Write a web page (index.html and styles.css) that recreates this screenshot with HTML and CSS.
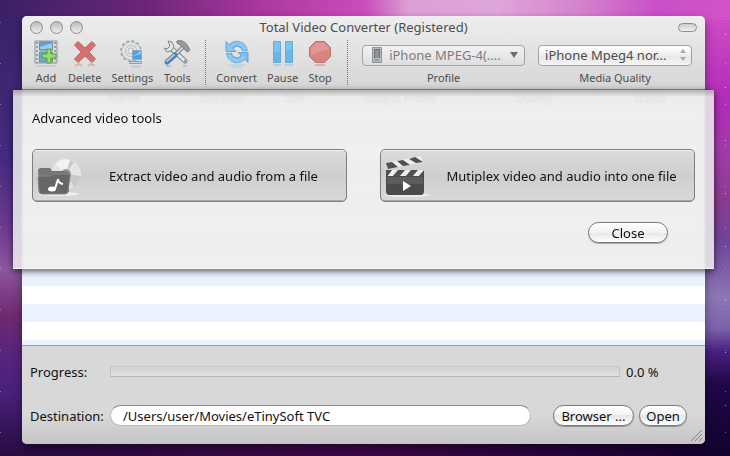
FILE: index.html
```html
<!DOCTYPE html>
<html lang="en">
<head>
<meta charset="utf-8">
<title>Total Video Converter</title>
<link rel="stylesheet" href="styles.css">
</head>
<body>
<main class="window">
  <header class="chrome">
    <div class="titlebar">
      <div class="lights">
        <button class="light" type="button" aria-label="Close window"></button>
        <button class="light" type="button" aria-label="Minimize"></button>
        <button class="light" type="button" aria-label="Zoom"></button>
      </div>
      <h1 class="title">Total Video Converter (Registered)</h1>
      <button class="pill" type="button" aria-label="Toggle toolbar"></button>
    </div>
    <div class="toolbar">
      <div class="tools">
        <button class="tool" type="button">
          <svg class="icon" viewBox="0 0 24 28">
            <path d="M1 1h22v22H1z" fill="#d9dcdc" stroke="#8d9595"/>
            <path d="M5.500 2h13v8h-13z" fill="#5ba3dc" stroke="#728a99"/>
            <path d="M5.500 12h13v10h-13z" fill="#62a9de" stroke="#728a99"/>
            <path d="M6 7l12-4v6H6z" fill="#9accee"/>
            <path d="M3 2v21M21 2v21" stroke="#9aa0a0" stroke-width="2" stroke-dasharray="2 2"/>
            <path d="M13 9h4v5h5v4h-5v5h-4v-5H8v-4h5z" fill="#9bdc69" stroke="#4fa43d"/>
            <path d="M2 25h20v2H2z" fill="#bac6ce" opacity=".6"/>
          </svg>
          Add
        </button>
        <button class="tool" type="button">
          <svg class="icon" viewBox="0 0 24 28">
            <path d="M5 1.500l7 6.500 7-6.500 3.500 3.500-6.500 7 6.500 7-3.500 3.500-7-6.500-7 6.500L1.500 19 8 12 1.500 5z" fill="#d4706e" stroke="#bf6664" stroke-linejoin="round"/>
            <path d="M2 26l4-2 3 2M15 26l3-2 4 2" fill="none" stroke="#d99a99" stroke-width="2" opacity=".6"/>
          </svg>
          Delete
        </button>
        <button class="tool" type="button">
          <svg class="icon" viewBox="0 0 24 28">
            <circle cx="11" cy="11" r="9.500" fill="none" stroke="#a2afb8" stroke-width="3" stroke-dasharray="2.500 2.500"/>
            <circle cx="11" cy="11" r="7.500" fill="none" stroke="#98a6af" stroke-width="4"/>
            <circle cx="11" cy="11" r="7.500" fill="none" stroke="#dfe4e7" stroke-width="3"/>
            <circle cx="11" cy="11" r="3" fill="#e7e9ea" stroke="#b3bdc3"/>
            <path d="M12.500 10.500h9v9h-9z" fill="#4c9fe0" stroke="#8faabd"/>
            <path d="M13 16l8-5v3z" fill="#91c9f3"/>
            <path d="M9.500 21.500h12v2h-12z" fill="#c9d5dd" stroke="#8da0ae"/>
            <path d="M11 26.500h10" stroke="#9fc4df" opacity=".6" stroke-width="2"/>
          </svg>
          Settings
        </button>
        <button class="tool" type="button">
          <svg class="icon icon-wide" viewBox="0 0 28 28">
            <path d="M8 8L22 21" stroke="#7b848b" stroke-width="5" stroke-linecap="round"/>
            <path d="M8 8L22 21" stroke="#e5e8ea" stroke-width="3" stroke-linecap="round"/>
            <path d="M5 1l4 1 2 5-3 4-4 1-3-4 3 1 3-3z" fill="#e2e5e7" stroke="#7c858b"/>
            <circle cx="22" cy="21" r="1" fill="#788085"/>
            <path d="M20 7L10 17" stroke="#7b8084" stroke-width="4"/>
            <path d="M20 7L10 17" stroke="#d5d8da" stroke-width="2"/>
            <path d="M14 1c6-1 8 1 10 4l3 5-3 2-5-6-5-3z" fill="#9a9ea1" stroke="#74797d"/>
            <path d="M12 15L4 22" stroke="#567fae" stroke-width="5" stroke-linecap="round"/>
            <path d="M11 15L4 21" stroke="#a9c7e6" stroke-width="2" stroke-linecap="round"/>
            <path d="M3 26h5M20 26h4" stroke="#91a5b8" stroke-width="2" opacity=".5"/>
          </svg>
          Tools
        </button>
      </div>
      <div class="actions">
        <button class="tool" type="button">
          <svg class="icon" viewBox="0 0 24 28">
            <g fill="none" stroke="#62a5da" stroke-width="6">
              <path d="M5 8a8 8 0 0 1 15 3"/><path d="M19 16a8 8 0 0 1-15-3"/>
            </g>
            <path d="M1 1.500v10h10z" fill="#8fc6f0" stroke="#62a5da" stroke-linejoin="round"/>
            <path d="M23 22.500v-10H13z" fill="#7dbbea" stroke="#62a5da" stroke-linejoin="round"/>
            <g fill="none" stroke="#8fc6f0" stroke-width="4">
              <path d="M5 8a8 8 0 0 1 15 2"/><path d="M19 16a8 8 0 0 1-15-2"/>
            </g>
            <path d="M3 25h18M6 27h12" stroke="#94c2e4" opacity=".6"/>
          </svg>
          Convert
        </button>
        <button class="tool" type="button">
          <svg class="icon" viewBox="0 0 24 28">
            <path d="M2.500 1.500h7v21h-7zM14.500 1.500h7v21h-7z" fill="#7cc4f0" stroke="#67abd7" stroke-linejoin="round"/>
            <path d="M3 13l6-2v11H3zM15 11l6-2v13h-6z" fill="#68b7ec"/>
            <path d="M2 25h8M14 25h8" stroke="#a0c8e2" stroke-width="2" opacity=".7"/>
          </svg>
          Pause
        </button>
        <button class="tool" type="button">
          <svg class="icon" viewBox="0 0 24 28">
            <path d="M7.500 1.500h9l6 6v9l-6 6h-9l-6-6v-9z" fill="#d98481" stroke="#b77270"/>
            <path d="M8 3h8l5 5v2C15 10 9 13 3 15V8z" fill="#e09996"/>
            <path d="M7 25h10" stroke="#d6a09e" stroke-width="2" opacity=".7"/>
          </svg>
          Stop
        </button>
      </div>
      <div class="field profile">
        <div class="combo">
          <svg class="phone" viewBox="0 0 10 16">
            <path d="M.5.5h9v15h-9z" fill="#bbb" stroke="#929292"/>
            <path d="M2 2h6v9H2z" fill="#68727a"/>
            <path d="M3 4h4M3 6h4M3 8h4M3 10h4" stroke="#aab8bf"/>
            <path d="M3 13h4" stroke="#777"/>
          </svg>
          <select class="select select-profile" id="profile"><option>iPhone MPEG-4(....</option></select>
          <svg class="arrow" viewBox="0 0 8 6"><path d="M0 0h8L4 6z" fill="#6e6e6e"/></svg>
        </div>
        <label for="profile">Profile</label>
      </div>
      <div class="field quality">
        <div class="combo">
          <select class="select select-quality" id="quality"><option>iPhone Mpeg4 nor...</option></select>
          <svg class="steppers" viewBox="0 0 6 12"><path d="M0 4h6L3 0zM0 8h6l-3 4z" fill="#aaa"/></svg>
        </div>
        <label for="quality">Media Quality</label>
      </div>
    </div>
  </header>

  <section class="content">
    <table class="files">
      <colgroup>
        <col class="c-mark"><col class="c-name"><col class="c-duration"><col class="c-size"><col class="c-output"><col class="c-quality"><col class="c-status">
      </colgroup>
      <thead>
        <tr><th></th><th>Name</th><th>Duration</th><th>Size</th><th>Output Profile</th><th>Quality</th><th>Status</th></tr>
      </thead>
    </table>
    <div class="sheet" role="dialog" aria-labelledby="sheet-title">
      <h2 class="sheet-title" id="sheet-title">Advanced video tools</h2>
      <div class="choices">
        <button class="choice" type="button">
          <svg class="choice-icon" viewBox="0 0 48 44">
            <ellipse cx="22" cy="40" rx="20" ry="2" fill="#eee"/>
            <circle cx="29" cy="20" r="15" fill="#e4e4e4"/>
            <path d="M29 20L18 10A15 15 0 0 1 33 6z" fill="#f2f2f2"/>
            <path d="M29 20L33 6l4 2zM29 20l15 2a15 15 0 0 1-7 11z" fill="#c9c9c9"/>
            <circle cx="29" cy="20" r="5" fill="#999"/>
            <circle cx="29" cy="20" r="2" fill="#ddd"/>
            <path d="M1 17q0-3 3-3h9l2 3h14q3 0 3 3v18H3z" fill="#747474"/>
            <path d="M1 24q0-2 3-2h9l3-2h15q3 0 2 3l-2 14q0 3-3 3H5q-3 0-3-3z" fill="#666" stroke="#858585"/>
            <ellipse cx="15" cy="35" rx="4" ry="2.500" fill="#fff"/>
            <path d="M18 35l3-10q0 4 5 5" fill="none" stroke="#fff" stroke-width="2"/>
          </svg>
          <span class="choice-text">Extract video and audio from a file</span>
        </button>
        <button class="choice" type="button">
          <svg class="choice-icon" viewBox="0 0 48 44">
            <ellipse cx="22" cy="41" rx="22" ry="2" fill="#efefef"/>
            <path d="M1 9L36 2l2 6L3 15z" fill="#eee"/>
            <path d="M1 9l6-1 6 5-10 2zM12 7l6-1 7 5-7 1zM24 5l6-2 8 5-7 1z" fill="#505050"/>
            <path d="M1 16h38v7H1z" fill="#eee"/>
            <path d="M1 16h6l-5 7H1zM13 16h7l-6 7H7zM26 16h7l-6 7h-7zM39 16v7h-6z" fill="#505050"/>
            <path d="M1 22h38v15q0 4-3 4H4q-3 0-3-4z" fill="#4b4b4b"/>
            <path d="M2 23h36v7H2z" fill="#5c5c5c"/>
            <path d="M18 27l8 5-8 5z" fill="#fff"/>
          </svg>
          <span class="choice-text">Mutiplex video and audio into one file</span>
        </button>
      </div>
      <div class="sheet-actions"><button class="aqua aqua-close" type="button">Close</button></div>
    </div>
  </section>

  <footer class="bottom">
    <div class="row row-progress">
      <span class="row-label" id="progress-label">Progress:</span>
      <div class="progress" role="progressbar" aria-labelledby="progress-label" aria-valuenow="0" aria-valuemin="0" aria-valuemax="100"></div>
      <span class="percent">0.0 %</span>
    </div>
    <div class="row">
      <label class="row-label" for="destination">Destination:</label>
      <input class="path" id="destination" type="text" value="/Users/user/Movies/eTinySoft TVC">
      <div class="row-buttons">
        <button class="aqua aqua-browse" type="button">Browser ...</button>
        <button class="aqua aqua-open" type="button">Open</button>
      </div>
    </div>
    <svg class="grip" viewBox="0 0 12 12"><path d="M1 12L12 1M5 12l7-7M9 12l3-3" stroke="#858585" fill="none"/></svg>
  </footer>
</main>
</body>
</html>
```
FILE: styles.css
```css
* { box-sizing: border-box; }

body {
  margin: 0;
  min-height: 100vh;
  display: flex;
  padding: 16px 25px 12px 22px;
  font: 13px/16px "Noto Sans", "Open Sans", sans-serif;
  color: #111;
  background:
    radial-gradient(circle, rgba(255, 255, 255, .6), transparent 1px) 4px 8px / 37px 53px,
    radial-gradient(circle, rgba(255, 255, 255, .35), transparent 1px) 15px 2px / 29px 41px,
    linear-gradient(90deg, #3a2065, #6c2579 20%, #a9369d 35%, #cc4cbc 50%, #dc9fd5 56%, #dfa6da 68%, #d481cd 80%, #c94fc8 90%, #d352c8) top / 100% 20px no-repeat,
    linear-gradient(#3a2065, #452b80 35%, #6d3a90 50%, #8c579f 59%, #6f2a70 69%, #55257d 78%, #4a207c 86%, #280c42) left / 24px 100% no-repeat,
    linear-gradient(#d352c8, #b12cb8 22%, #a23ba9 33%, #8a3c90 44%, #6f449b 53%, #8c77b4 65%, #7c62aa 72%, #4a2080 77%, #200849 84%, #12022f) right / 27px 100% no-repeat,
    linear-gradient(90deg, #280c42, #3c0648 50%, #12022f);
}

button, select, input { font: inherit; color: inherit; margin: 0; }
button { cursor: default; }

.window {
  flex: 1;
  min-width: 0;
  display: flex;
  flex-direction: column;
  border-radius: 5px;
  background: #d7d7d7;
  box-shadow: 0 4px 10px rgba(0, 0, 0, .4);
}

.chrome {
  border-radius: 5px 5px 0 0;
  border-bottom: 1px solid #8c8c8c;
  background: linear-gradient(#eee, #d6d6d6);
  color: #4c4c4c;
}

.titlebar {
  display: grid;
  grid-template-columns: 1fr auto 1fr;
  align-items: center;
  height: 22px;
  padding: 0 8px;
}
.lights { display: flex; gap: 7px; }
.light {
  width: 13px;
  height: 13px;
  padding: 0;
  border: 1px solid #8e8e8e;
  border-radius: 50%;
  background: linear-gradient(#bbb, #eee);
}
.title { margin: 0; font-size: 13px; font-weight: 400; }
.pill {
  justify-self: end;
  width: 19px;
  height: 9px;
  padding: 0;
  border: 1px solid #8f8f8f;
  border-radius: 5px;
  background: linear-gradient(#ccc, #f1f1f1);
}

.toolbar {
  display: flex;
  align-items: flex-start;
  padding: 2px 13px 4px 12px;
  font-size: 11px;
  line-height: 14px;
}
.tools, .actions { display: flex; gap: 10px; }
.tools { padding-right: 14px; border-right: 1px dotted #777; }
.actions { padding: 0 15px 0 10px; border-right: 1px dotted #777; }
.tool {
  display: flex;
  flex-direction: column;
  align-items: center;
  gap: 3px;
  padding: 0;
  border: 0;
  background: none;
}
.icon { width: 24px; height: 28px; }
.icon-wide { width: 28px; }

.field {
  display: flex;
  flex-direction: column;
  align-items: center;
  gap: 5px;
  padding-top: 5px;
}
.profile { flex: 163; margin-left: 14px; }
.quality { flex: 154; margin-left: 13px; }
.combo { position: relative; width: 100%; }
.select {
  display: block;
  appearance: none;
  width: 100%;
  height: 21px;
  border: 1px solid #a2a2a2;
  border-radius: 4px;
  background: linear-gradient(#fff, #eee 50%, #e7e7e7 50%, #f4f4f4);
  font-size: 13px;
  line-height: 19px;
}
.select-profile { padding: 0 22px 0 26px; color: #7c7c7c; background: linear-gradient(#f2f2f2, #dedede); }
.select-quality { padding: 0 20px 0 6px; }
.phone { position: absolute; left: 10px; top: 2px; width: 10px; height: 16px; z-index: 1; }
.arrow { position: absolute; right: 7px; top: 7px; width: 8px; height: 6px; }
.steppers { position: absolute; right: 6px; top: 4px; width: 6px; height: 12px; }

.content {
  position: relative;
  flex: 1;
  min-height: 180px;
  border-bottom: 1px solid #a0a0a0;
  background: repeating-linear-gradient(#fff 0 18px, #eaf1ff 18px 36px) 0 16px;
}
.files { width: 100%; table-layout: fixed; border-collapse: collapse; }
.files th {
  height: 16px;
  padding: 0;
  border-right: 1px solid #ccc;
  background: #eee;
  color: #777;
  font-size: 11px;
  font-weight: 400;
  line-height: 14px;
}
.c-mark { width: 6%; }
.c-name { width: 18%; }
.c-duration { width: 11%; }
.c-size { width: 10%; }
.c-output { width: 21%; }
.c-quality { width: 18%; }

.sheet {
  position: absolute;
  top: 0;
  left: -9px;
  right: -9px;
  padding: 20px 19px 26px;
  background: linear-gradient(rgba(120, 120, 120, .5), transparent 7px), rgba(237, 237, 237, .87);
  backdrop-filter: blur(1px);
  box-shadow: 0 2px 7px rgba(0, 0, 0, .65), inset 0 -1px #f8f8f8;
}
.sheet-title { margin: 0 0 23px; font-size: 13px; font-weight: 400; }
.choices { display: flex; gap: 33px; }
.choice {
  flex: 1;
  display: flex;
  align-items: center;
  height: 53px;
  padding: 0 4px;
  border: 1px solid #7e7e7e;
  border-radius: 5px;
  background: linear-gradient(#dcdcdc, #cecece 50%, #d9d9d9);
  box-shadow: inset 0 1px #f3f3f3, inset 0 -1px #aaa;
}
.choice-icon { width: 48px; height: 44px; }
.choice-text { flex: 1; }
.sheet-actions { display: flex; justify-content: flex-end; padding: 20px 27px 0 0; }

.aqua {
  height: 21px;
  padding: 0;
  border: 1px solid #777;
  border-radius: 11px;
  background: linear-gradient(#fff, #f2f2f2 50%, #e6e6e6 50%, #fff);
  box-shadow: 0 1px 1px rgba(0, 0, 0, .3);
  line-height: 18px;
}
.aqua-close { width: 80px; }
.aqua-browse { width: 81px; }
.aqua-open { width: 48px; }

.bottom {
  position: relative;
  display: flex;
  flex-direction: column;
  gap: 23px;
  padding: 15px 18px 18px 8px;
  border-radius: 0 0 5px 5px;
  background: linear-gradient(#d8d8d8 70%, #c5c5c5);
}
.row { display: flex; align-items: center; }
.row-label { width: 80px; }
.row-progress { height: 21px; }
.progress {
  flex: 1;
  height: 11px;
  border: 1px solid #c6c6c6;
  border-bottom-color: #b4b4b4;
  background: linear-gradient(#d1d1d1, #e2e2e2);
}
.percent { width: 67px; padding-left: 6px; }
.path {
  flex: 1;
  min-width: 0;
  height: 21px;
  padding: 0 12px;
  border: 1px solid #bbb;
  border-top-color: #888;
  border-radius: 11px;
  background: #fff;
}
.row-buttons { display: flex; gap: 5px; padding-left: 22px; }
.grip { position: absolute; right: 3px; bottom: 3px; width: 12px; height: 12px; }
```
